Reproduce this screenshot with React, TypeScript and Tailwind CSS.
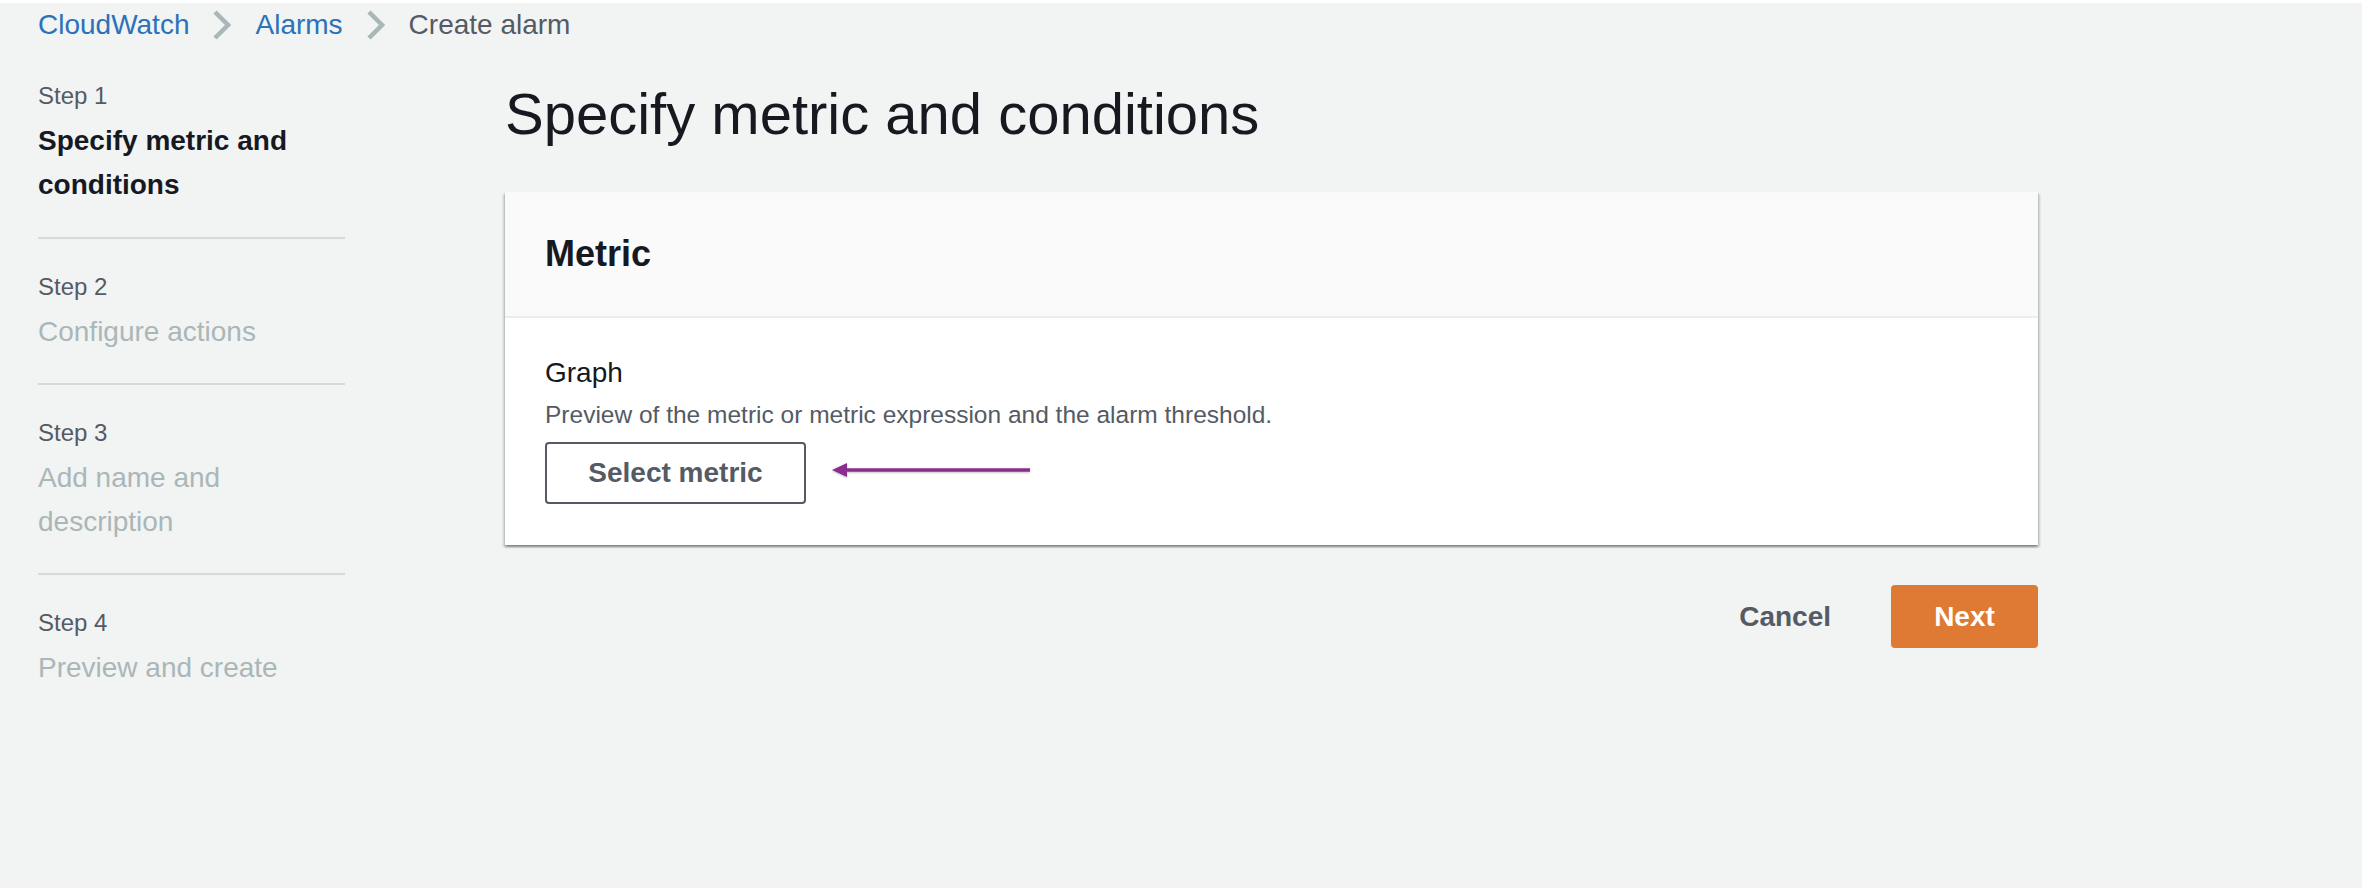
const steps = [
  { label: 'Step 1', title: 'Specify metric and conditions', active: true },
  { label: 'Step 2', title: 'Configure actions', active: false },
  { label: 'Step 3', title: 'Add name and description', active: false },
  { label: 'Step 4', title: 'Preview and create', active: false },
];

function Chevron() {
  return (
    <svg width="18" height="30" viewBox="0 0 18 30" className="mx-[24px] shrink-0">
      <path d="M2 2 L15 15 L2 28" fill="none" stroke="#aab7b8" strokeWidth="4.5" />
    </svg>
  );
}

function Arrow() {
  return (
    <svg width="198" height="16" viewBox="0 0 198 16" className="drop-shadow-[0_1px_1px_rgba(0,0,0,0.25)]">
      <polygon points="0,8 15,1 15,15" fill="#8b2c8f" />
      <line x1="13" y1="8" x2="198" y2="8" stroke="#8b2c8f" strokeWidth="3.5" />
    </svg>
  );
}

export default function App() {
  return (
    <div className="min-h-screen bg-[#f2f3f3] font-['Liberation_Sans',Arial,sans-serif] text-[#16191f]">
      {/* breadcrumb */}
      <nav className="flex items-center h-[44px] mt-[3px] pl-[38px] text-[28px]">
        <span className="text-[#2b72b8]">CloudWatch</span>
        <Chevron />
        <span className="text-[#2b72b8]">Alarms</span>
        <Chevron />
        <span className="text-[#545b64]">Create alarm</span>
      </nav>

      <div className="flex pl-[38px] pt-[33px] gap-[160px]">
        {/* steps */}
        <ul className="w-[307px] shrink-0">
          {steps.map((s, i) => (
            <li
              key={s.label}
              className={`${i > 0 ? 'pt-[32px]' : ''} ${i < steps.length - 1 ? 'pb-[29px] border-b-2 border-[#d5dbdb]' : ''} ${i === 0 ? 'pb-[30px]' : ''}`}
            >
              <div className="text-[24px] leading-[32px] text-[#545b64]">{s.label}</div>
              <div
                className={`mt-[7px] text-[28px] leading-[44px] ${s.active ? 'font-bold text-[#16191f]' : 'text-[#aab7b8]'}`}
              >
                {s.title}
              </div>
            </li>
          ))}
        </ul>

        {/* main */}
        <main className="w-[1533px] shrink-0">
          <h1 className="text-[58px] leading-[68px] font-normal">Specify metric and conditions</h1>

          <section className="mt-[44px] bg-white shadow-[0_2px_2px_0_rgba(0,28,36,0.3),2px_2px_2px_0_rgba(0,28,36,0.15),-2px_2px_2px_0_rgba(0,28,36,0.15)]">
            <div className="h-[126px] flex items-center px-[40px] bg-[#fafafa] border-b-2 border-[#eaeded]">
              <h2 className="text-[36px] font-bold">Metric</h2>
            </div>
            <div className="px-[40px] pt-[33px] pb-[41px]">
              <div className="text-[28px] leading-[44px]">Graph</div>
              <div className="mt-[4px] text-[24.5px] leading-[32px] text-[#545b64]">
                Preview of the metric or metric expression and the alarm threshold.
              </div>
              <div className="mt-[11px] flex items-center gap-[26px]">
                <button className="w-[261px] h-[62px] border-2 border-[#545b64] rounded-[4px] bg-white text-[28px] font-bold text-[#545b64]">
                  Select metric
                </button>
                <div className="-mt-[6px]">
                  <Arrow />
                </div>
              </div>
            </div>
          </section>

          <div className="mt-[40px] flex justify-end items-center gap-[60px]">
            <button className="text-[28px] font-bold text-[#545b64]">Cancel</button>
            <button className="w-[147px] h-[63px] rounded-[4px] bg-[#de7a34] text-white text-[28px] font-bold">
              Next
            </button>
          </div>
        </main>
      </div>
    </div>
  );
}
